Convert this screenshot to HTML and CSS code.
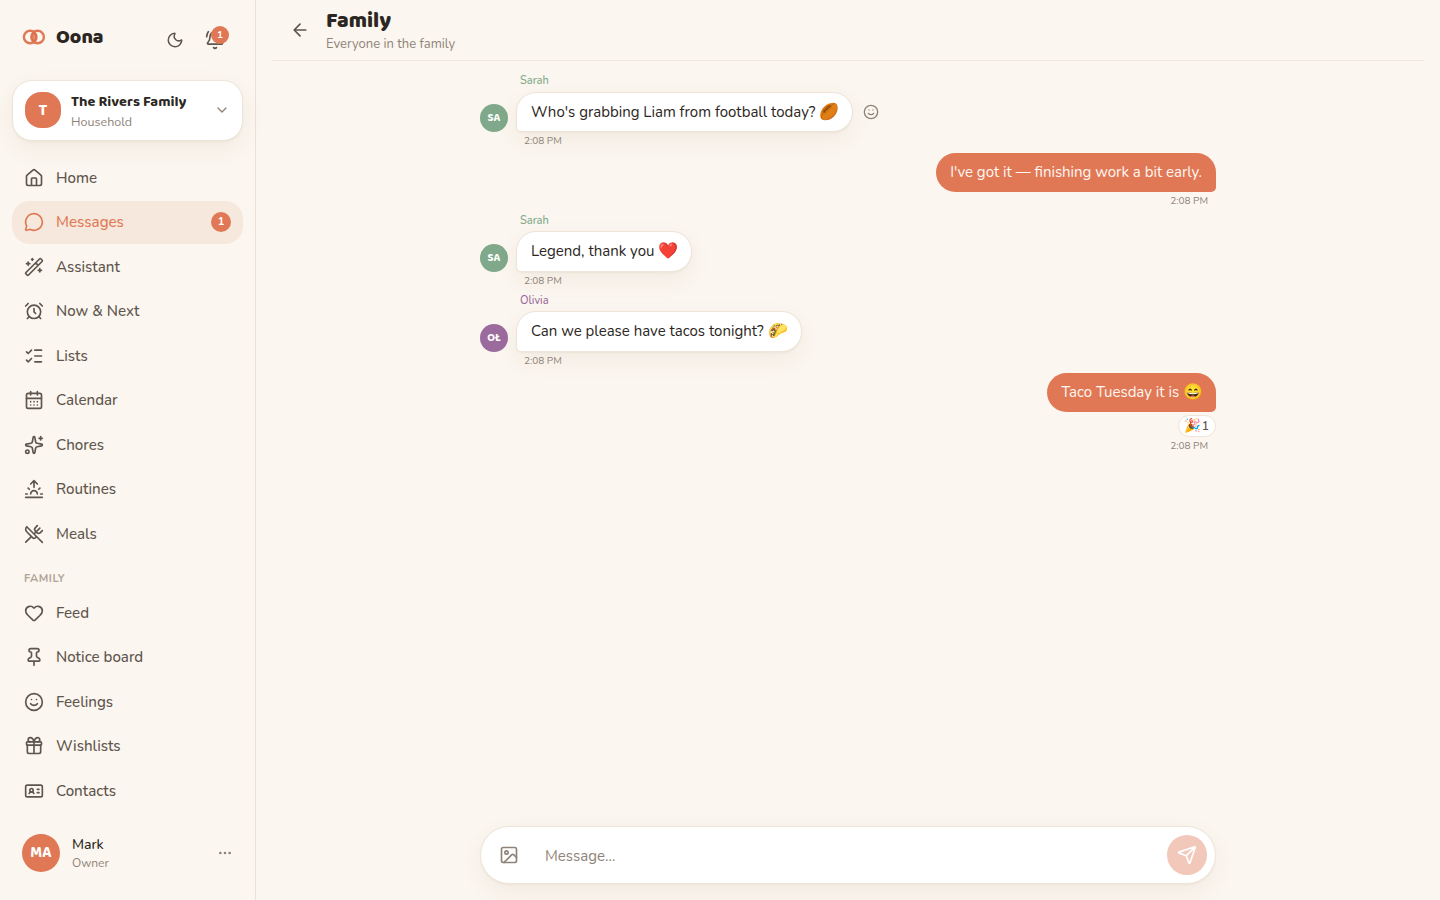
FILE: index.html
```html
<!DOCTYPE html>
<html lang="en">
<head>
    <meta charset="UTF-8">
    <title>Oona - Messages</title>
    <link rel="stylesheet" href="styles.css">
</head>
<body>
    <div class="app">
        <aside class="sidebar">
            <div class="brand">
                <svg class="logo" viewBox="0 0 24 16">
                    <circle cx="8.2" cy="8" r="6.3"/>
                    <circle cx="15.6" cy="8" r="6.3"/>
                    <path d="M11.9 2.9a6.3 6.3 0 0 1 0 10.2a6.3 6.3 0 0 1 0-10.2z"/>
                </svg>
                <span class="brand-name">Oona</span>
                <svg class="icon moon" viewBox="0 0 24 24"><path d="M20.985 12.486a9 9 0 1 1-9.473-9.472c.405-.022.617.46.402.803a6 6 0 0 0 8.268 8.268c.344-.215.825-.004.803.401"/></svg>
                <div class="bell">
                    <svg class="icon" viewBox="0 0 24 24"><path d="M10.268 21a2 2 0 0 0 3.464 0M22 8c0-2.3-.8-4.3-2-6M3.262 15.326A1 1 0 0 0 4 17h16a1 1 0 0 0 .74-1.673C19.41 13.956 18 12.499 18 8A6 6 0 0 0 6 8c0 4.499-1.411 5.956-2.738 7.326M4 2C2.8 3.7 2 5.7 2 8"/></svg>
                    <span class="bell-count">1</span>
                </div>
            </div>

            <div class="household">
                <div class="household-mark">T</div>
                <div class="household-text">
                    <div class="household-name">The Rivers Family</div>
                    <div class="household-sub">Household</div>
                </div>
                <svg class="icon chevron" viewBox="0 0 24 24"><path d="m6 9 6 6 6-6"/></svg>
            </div>

            <nav class="nav">
                <a class="nav-item">
                    <svg class="icon" viewBox="0 0 24 24"><path d="M15 21v-8a1 1 0 0 0-1-1h-4a1 1 0 0 0-1 1v8M3 10a2 2 0 0 1 .709-1.528l7-6a2 2 0 0 1 2.582 0l7 6A2 2 0 0 1 21 10v9a2 2 0 0 1-2 2H5a2 2 0 0 1-2-2z"/></svg>
                    <span>Home</span>
                </a>
                <a class="nav-item active">
                    <svg class="icon" viewBox="0 0 24 24"><path d="M2.992 16.342a2 2 0 0 1 .094 1.167l-1.065 3.29a1 1 0 0 0 1.236 1.168l3.413-.998a2 2 0 0 1 1.099.092 10 10 0 1 0-4.777-4.719"/></svg>
                    <span>Messages</span>
                    <span class="nav-count">1</span>
                </a>
                <a class="nav-item">
                    <svg class="icon" viewBox="0 0 24 24"><path d="m21.64 3.64-1.28-1.28a1.21 1.21 0 0 0-1.72 0L2.36 18.64a1.21 1.21 0 0 0 0 1.72l1.28 1.28a1.2 1.2 0 0 0 1.72 0L21.64 5.36a1.2 1.2 0 0 0 0-1.72M14 7l3 3M5 6v4M19 14v4M10 2v2M7 8H3M21 16h-4M11 3H9"/></svg>
                    <span>Assistant</span>
                </a>
                <a class="nav-item">
                    <svg class="icon" viewBox="0 0 24 24"><circle cx="12" cy="13" r="8"/><path d="M12 9v4l2 2M5 3 2 6M22 6l-3-3M6.38 18.7 4 21M17.64 18.67 20 21"/></svg>
                    <span>Now &amp; Next</span>
                </a>
                <a class="nav-item">
                    <svg class="icon" viewBox="0 0 24 24"><path d="M13 5h8M13 12h8M13 19h8M3 17l2 2 4-4M3 7l2 2 4-4"/></svg>
                    <span>Lists</span>
                </a>
                <a class="nav-item">
                    <svg class="icon" viewBox="0 0 24 24"><path d="M8 2v4M16 2v4M3 10h18M8 14h.01M12 14h.01M16 14h.01M8 18h.01M12 18h.01M16 18h.01"/><rect x="3" y="4" width="18" height="18" rx="2"/></svg>
                    <span>Calendar</span>
                </a>
                <a class="nav-item">
                    <svg class="icon" viewBox="0 0 24 24"><path d="M11.017 2.814a1 1 0 0 1 1.966 0l1.051 5.558a2 2 0 0 0 1.594 1.594l5.558 1.051a1 1 0 0 1 0 1.966l-5.558 1.051a2 2 0 0 0-1.594 1.594l-1.051 5.558a1 1 0 0 1-1.966 0l-1.051-5.558a2 2 0 0 0-1.594-1.594l-5.558-1.051a1 1 0 0 1 0-1.966l5.558-1.051a2 2 0 0 0 1.594-1.594zM20 2v4M22 4h-4"/><circle cx="4" cy="20" r="2"/></svg>
                    <span>Chores</span>
                </a>
                <a class="nav-item">
                    <svg class="icon" viewBox="0 0 24 24"><path d="M12 2v8M4.93 10.93l1.41 1.41M2 18h2M20 18h2M19.07 10.93l-1.41 1.41M22 22H2M8 6l4-4 4 4M16 18a4 4 0 0 0-8 0"/></svg>
                    <span>Routines</span>
                </a>
                <a class="nav-item">
                    <svg class="icon" viewBox="0 0 24 24"><path d="m16 2-2.3 2.3a3 3 0 0 0 0 4.2l1.8 1.8a3 3 0 0 0 4.2 0L22 8M15 15 3.3 3.3a4.2 4.2 0 0 0 0 6l7.3 7.3c.7.7 2 .7 2.8 0L15 15Zm0 0 7 7M2.1 21.8l6.4-6.3M19 5l-7 7"/></svg>
                    <span>Meals</span>
                </a>
                <div class="nav-label">FAMILY</div>
                <a class="nav-item">
                    <svg class="icon" viewBox="0 0 24 24"><path d="M2 9.5a5.5 5.5 0 0 1 9.591-3.676.56.56 0 0 0 .818 0A5.49 5.49 0 0 1 22 9.5c0 2.29-1.5 4-3 5.5l-5.492 5.313a2 2 0 0 1-3 .019L5 15c-1.5-1.5-3-3.2-3-5.5"/></svg>
                    <span>Feed</span>
                </a>
                <a class="nav-item">
                    <svg class="icon" viewBox="0 0 24 24"><path d="M12 17v5M9 10.76a2 2 0 0 1-1.11 1.79l-1.78.9A2 2 0 0 0 5 15.24V16a1 1 0 0 0 1 1h12a1 1 0 0 0 1-1v-.76a2 2 0 0 0-1.11-1.79l-1.78-.9A2 2 0 0 1 15 10.76V7a1 1 0 0 1 1-1 2 2 0 0 0 0-4H8a2 2 0 0 0 0 4 1 1 0 0 1 1 1z"/></svg>
                    <span>Notice board</span>
                </a>
                <a class="nav-item">
                    <svg class="icon" viewBox="0 0 24 24"><circle cx="12" cy="12" r="10"/><path d="M8 14s1.5 2 4 2 4-2 4-2M9 9h.01M15 9h.01"/></svg>
                    <span>Feelings</span>
                </a>
                <a class="nav-item">
                    <svg class="icon" viewBox="0 0 24 24"><path d="M12 7v14M20 11v8a2 2 0 0 1-2 2H6a2 2 0 0 1-2-2v-8M7.5 7a1 1 0 0 1 0-5A4.8 8 0 0 1 12 7a4.8 8 0 0 1 4.5-5 1 1 0 0 1 0 5"/><rect x="3" y="7" width="18" height="4" rx="1"/></svg>
                    <span>Wishlists</span>
                </a>
                <a class="nav-item">
                    <svg class="icon" viewBox="0 0 24 24"><path d="M16 10h2M16 14h2M6.17 15a3 3 0 0 1 5.66 0"/><circle cx="9" cy="11" r="2"/><rect x="2" y="5" width="20" height="14" rx="2"/></svg>
                    <span>Contacts</span>
                </a>
            </nav>

            <div class="user">
                <div class="user-avatar">MA</div>
                <div class="user-text">
                    <div class="user-name">Mark</div>
                    <div class="user-role">Owner</div>
                </div>
                <svg class="icon dots" viewBox="0 0 24 24"><circle cx="12" cy="12" r="1"/><circle cx="19" cy="12" r="1"/><circle cx="5" cy="12" r="1"/></svg>
            </div>
        </aside>

        <main class="main">
            <header class="chat-header">
                <svg class="icon back" viewBox="0 0 24 24"><path d="m12 19-7-7 7-7M19 12H5"/></svg>
                <div class="chat-title">
                    <h1>Family</h1>
                    <p>Everyone in the family</p>
                </div>
            </header>

            <div class="thread">
                <div class="message sarah">
                    <div class="sender">Sarah</div>
                    <div class="row">
                        <div class="avatar">SA</div>
                        <div class="bubble">Who's grabbing Liam from football today? <span class="emoji">🏉</span></div>
                        <svg class="icon react" viewBox="0 0 24 24"><circle cx="12" cy="12" r="10"/><path d="M8 14s1.5 2 4 2 4-2 4-2M9 9h.01M15 9h.01"/></svg>
                    </div>
                    <div class="time">2:08 PM</div>
                </div>

                <div class="message mine">
                    <div class="bubble">I've got it — finishing work a bit early.</div>
                    <div class="time">2:08 PM</div>
                </div>

                <div class="message sarah tall">
                    <div class="sender">Sarah</div>
                    <div class="row">
                        <div class="avatar">SA</div>
                        <div class="bubble">Legend, thank you <span class="emoji">❤️</span></div>
                    </div>
                    <div class="time">2:08 PM</div>
                </div>

                <div class="message olivia tall">
                    <div class="sender">Olivia</div>
                    <div class="row">
                        <div class="avatar">OŁ</div>
                        <div class="bubble">Can we please have tacos tonight? <span class="emoji">🌮</span></div>
                    </div>
                    <div class="time">2:08 PM</div>
                </div>

                <div class="message mine">
                    <div class="bubble">Taco Tuesday it is <span class="emoji">😄</span></div>
                    <div class="reaction"><span>🎉</span>1</div>
                    <div class="time">2:08 PM</div>
                </div>
            </div>

            <div class="composer">
                <svg class="icon" viewBox="0 0 24 24"><rect x="3" y="3" width="18" height="18" rx="2"/><circle cx="9" cy="9" r="2"/><path d="m21 15-3.086-3.086a2 2 0 0 0-2.828 0L6 21"/></svg>
                <span class="placeholder">Message…</span>
                <div class="send">
                    <svg class="icon" viewBox="0 0 24 24"><path d="M14.536 21.686a.5.5 0 0 0 .937-.024l6.5-19a.496.496 0 0 0-.635-.635l-19 6.5a.5.5 0 0 0-.024.937l7.93 3.18a2 2 0 0 1 1.112 1.11zM21.854 2.147l-10.94 10.939"/></svg>
                </div>
            </div>
        </main>
    </div>
</body>
</html>
```
FILE: styles.css
```css
* {
    box-sizing: border-box;
}

body {
    margin: 0;
    font-family: Nunito, Lato, "Open Sans", sans-serif;
    background-color: #fbf6ef;
    color: #2b2622;
}

.app {
    display: flex;
    height: 900px;
    overflow: hidden;
}

.icon {
    width: 20px;
    height: 20px;
    flex-shrink: 0;
    fill: none;
    stroke: currentColor;
    stroke-width: 2;
    stroke-linecap: round;
    stroke-linejoin: round;
}

/* Sidebar */
.sidebar {
    width: 256px;
    flex-shrink: 0;
    border-right: 1px solid #ebe1d8;
    padding: 0 12px;
    display: flex;
    flex-direction: column;
}

.brand {
    height: 80px;
    padding: 0 18px 6px 10px;
    display: flex;
    align-items: center;
    color: #5e554d;
}

.logo {
    width: 24px;
    height: 16px;
    fill: none;
    stroke: #e07856;
    stroke-width: 2.4;
}

.logo path {
    fill: #d96a45;
    stroke: none;
    opacity: 0.75;
}

.brand-name {
    margin-left: 10px;
    font-family: "Baloo 2", Lato, sans-serif;
    font-size: 19.7px;
    font-weight: 800;
    color: #2b2622;
}

.moon {
    width: 18px;
    height: 18px;
    margin-left: auto;
    margin-top: 6px;
}

.bell {
    position: relative;
    height: 20px;
    margin: 6px 0 0 21px;
}

.bell-count {
    position: absolute;
    top: -4px;
    left: 6px;
    width: 18px;
    height: 18px;
    border-radius: 50%;
    background-color: #e07856;
    color: white;
    font-size: 10px;
    font-weight: 700;
    line-height: 18px;
    text-align: center;
}

.household {
    height: 61px;
    border: 1px solid #efe4d8;
    border-radius: 20px;
    background-color: white;
    box-shadow: 0 1px 2px rgba(80, 50, 20, 0.05), 0 8px 24px rgba(80, 50, 20, 0.06);
    padding: 0 12px 1px;
    display: flex;
    align-items: center;
    flex-shrink: 0;
}

.household-mark {
    width: 36px;
    height: 36px;
    border-radius: 16px;
    background-color: #e07856;
    color: white;
    font-family: "Baloo 2", Lato, sans-serif;
    font-size: 16px;
    font-weight: 700;
    line-height: 37px;
    text-align: center;
    margin-right: 10px;
}

.household-text {
    padding-top: 3px;
}

.household-name {
    padding-top: 1px;
    font-family: "Baloo 2", Lato, sans-serif;
    font-size: 14.7px;
    font-weight: 700;
    line-height: 20px;
    white-space: nowrap;
}

.household-sub {
    font-size: 12.5px;
    line-height: 20px;
    color: #8f8378;
}

.chevron {
    width: 16px;
    height: 16px;
    margin-left: auto;
    color: #8f8378;
}

.nav {
    margin-top: 15.5px;
    display: flex;
    flex-direction: column;
    gap: 2px;
}

.nav-item {
    height: 42.5px;
    flex-shrink: 0;
    padding: 0 12px;
    border-radius: 18px;
    display: flex;
    align-items: center;
    gap: 12px;
    font-size: 15.1px;
    font-weight: 500;
    color: #5e554d;
}

.nav-item.active {
    background-color: #f6e8dc;
    color: #e07856;
}

.nav-count {
    width: 20px;
    height: 20px;
    margin-left: auto;
    border-radius: 50%;
    background-color: #e07856;
    color: white;
    font-size: 11px;
    font-weight: 700;
    line-height: 19px;
    text-align: center;
}

.nav-label {
    height: 32.5px;
    padding: 14px 12px 0;
    font-size: 11px;
    font-weight: 700;
    line-height: 16px;
    letter-spacing: 0.5px;
    color: #b0a498;
}

.user {
    margin-top: 22.3px;
    padding: 0 10px;
    height: 38px;
    display: flex;
    align-items: center;
}

.user-avatar {
    width: 38px;
    height: 38px;
    border-radius: 50%;
    background-color: #e07856;
    color: white;
    font-family: "Baloo 2", Lato, sans-serif;
    font-size: 15px;
    font-weight: 700;
    line-height: 39px;
    text-align: center;
    margin-right: 12px;
}

.user-name {
    padding-top: 1px;
    font-size: 14px;
    font-weight: 500;
    line-height: 19px;
}

.user-role {
    font-size: 12px;
    line-height: 18px;
    color: #8f8378;
}

.dots {
    width: 16px;
    height: 16px;
    margin-left: auto;
    color: #8f8378;
}

/* Chat */
.main {
    flex: 1;
    padding: 0 16px 16px;
    display: flex;
    flex-direction: column;
}

.chat-header {
    height: 61px;
    border-bottom: 1px solid #f1e8df;
    padding-left: 18px;
    display: flex;
    align-items: center;
    flex-shrink: 0;
}

.back {
    margin-right: 16px;
    color: #5e554d;
}

.chat-title {
    padding-top: 2px;
}

.chat-header h1 {
    margin: 0;
    font-family: "Baloo 2", Lato, sans-serif;
    font-size: 21.6px;
    font-weight: 800;
    line-height: 26px;
}

.chat-header p {
    margin: 0;
    font-size: 13px;
    line-height: 20px;
    color: #8f8378;
}

.thread {
    flex: 1;
    width: 736px;
    margin: 0 auto;
    padding-top: 11px;
    display: flex;
    flex-direction: column;
    gap: 4px;
}

.sender {
    height: 20px;
    margin-left: 40px;
    font-size: 11px;
    font-weight: 500;
    line-height: 18px;
}

.sarah .sender {
    color: #7fa98a;
}

.olivia .sender {
    color: #9c6b9e;
}

.row {
    display: flex;
    align-items: flex-end;
}

.avatar {
    width: 28px;
    height: 28px;
    border-radius: 50%;
    background-color: #7fa98a;
    color: white;
    font-family: "Baloo 2", Lato, sans-serif;
    font-size: 11px;
    font-weight: 700;
    line-height: 29px;
    text-align: center;
    margin-right: 8px;
}

.olivia .avatar {
    background-color: #9c6b9e;
}

.bubble {
    height: 40px;
    padding: 0 14px;
    border: 1px solid #efe4d8;
    border-radius: 20px 20px 20px 5px;
    background-color: white;
    box-shadow: 0 1px 2px rgba(80, 50, 20, 0.05), 0 8px 24px rgba(80, 50, 20, 0.06);
    font-size: 15px;
    line-height: 38px;
    white-space: nowrap;
}

.tall .bubble {
    height: 41px;
    margin-top: -1px;
}

.emoji {
    font-size: 16px;
    line-height: 1;
    margin-right: -1px;
}

.react {
    width: 16px;
    height: 16px;
    margin: 0 0 12px 10px;
    color: #8f8378;
}

.time {
    height: 14px;
    margin: 2px 0 0 44px;
    font-size: 10px;
    line-height: 14px;
    color: #8f8378;
}

.mine {
    display: flex;
    flex-direction: column;
    align-items: flex-end;
    padding-top: 1px;
}

.mine .bubble {
    height: 39px;
    border: none;
    border-radius: 20px 20px 5px 20px;
    background-color: #e07856;
    color: #fff6f0;
    box-shadow: none;
}

.mine .time {
    margin-right: 8px;
}

.reaction {
    height: 22px;
    margin-top: 3px;
    padding: 0 6px 0 5px;
    border: 1px solid #efe4d8;
    border-radius: 11px;
    background-color: white;
    font-size: 12px;
    font-weight: 600;
    line-height: 20px;
    color: #5e554d;
}

.reaction span {
    font-size: 13.5px;
    margin-right: 1px;
}

.composer {
    width: 736px;
    height: 58px;
    margin: 0 auto;
    padding: 0 8px 0 18px;
    border: 1px solid #efe4d8;
    border-radius: 29px;
    background-color: white;
    box-shadow: 0 1px 2px rgba(80, 50, 20, 0.05), 0 8px 24px rgba(80, 50, 20, 0.06);
    display: flex;
    align-items: center;
    color: #8f8378;
}

.placeholder {
    margin-left: 26px;
    padding-top: 2px;
    font-size: 15px;
}

.send {
    width: 40px;
    height: 40px;
    margin-left: auto;
    border-radius: 50%;
    background-color: #f1c8ba;
    color: white;
    display: flex;
    align-items: center;
    justify-content: center;
}
```
